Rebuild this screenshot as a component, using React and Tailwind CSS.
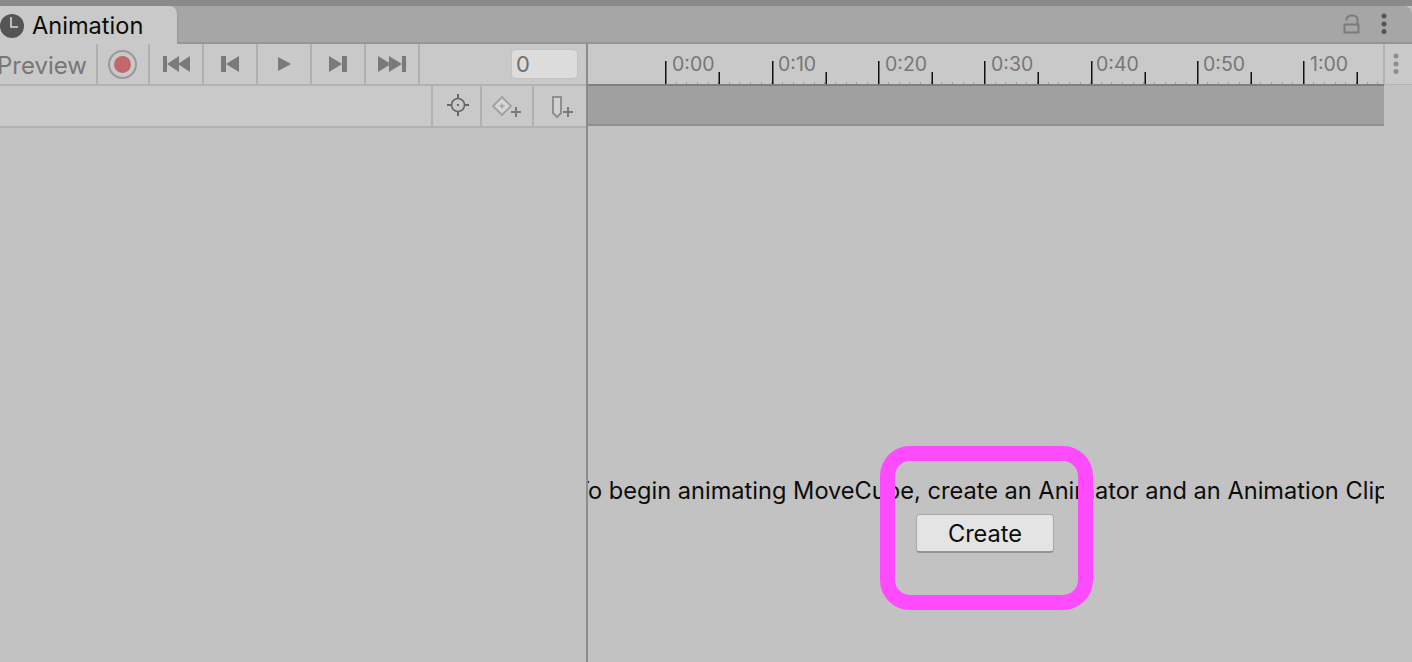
const font = { fontFamily: "Inter, 'Liberation Sans', sans-serif" };

const MAJOR = [
  [665, "0:00", 672],
  [772, "0:10", 778],
  [878, "0:20", 885],
  [984, "0:30", 991],
  [1091, "0:40", 1096],
  [1197, "0:50", 1203],
  [1303, "1:00", 1310],
];

function Clock() {
  return (
    <svg width="24" height="24" viewBox="0 0 24 24" className="shrink-0">
      <circle cx="12" cy="12" r="12" fill="#555555" />
      <path d="M11 3v10h7" fill="none" stroke="#d8d8d8" strokeWidth="1.6" />
    </svg>
  );
}

function Lock() {
  return (
    <svg width="18" height="21" viewBox="0 0 18 21">
      <path d="M1.5 10.5h14v8h-14z" fill="none" stroke="#7b7b7b" strokeWidth="2" />
      <path d="M3.500 6.500a4.500 4.500 0 0 1 4.500-5h2a4.500 4.500 0 0 1 4.500 4.500v4.500" fill="none" stroke="#7b7b7b" strokeWidth="2" />
    </svg>
  );
}

function Dots({ color }) {
  return (
    <svg width="6" height="22" viewBox="0 0 6 22">
      <circle cx="3" cy="3" r="2.500" fill={color} />
      <circle cx="3" cy="11" r="2.500" fill={color} />
      <circle cx="3" cy="18.500" r="2.500" fill={color} />
    </svg>
  );
}

function Transport({ d, w }) {
  return (
    <svg width={w} height="16" viewBox={`0 0 ${w} 16`}>
      <path d={d} fill="#7a7a7a" />
    </svg>
  );
}

function ToolCell({ width, children }) {
  return (
    <div
      className={`${width} h-full shrink-0 flex items-center justify-center border-r-[2px] border-[#b0b0b0]`}
    >
      {children}
    </div>
  );
}

function Target() {
  return (
    <svg width="24" height="24" viewBox="0 0 24 24">
      <circle cx="12" cy="12" r="6.500" fill="none" stroke="#666666" strokeWidth="1.600" />
      <path d="M12 1v5M12 18v5M1 12h5M18 12h5" stroke="#666666" strokeWidth="2" />
      <rect x="11" y="11" width="2" height="2" fill="#666666" />
    </svg>
  );
}

function KeyAdd() {
  return (
    <svg width="30" height="24" viewBox="0 0 30 24">
      <path d="M10 3l9 9-9 9-9-9z" fill="#d6d6d6" stroke="#a0a0a0" strokeWidth="1.800" />
      <path d="M10 9.500v5M7.500 12h5" stroke="#a0a0a0" strokeWidth="1.400" />
      <path d="M24 13v10M19 18h10" stroke="#7a7a7a" strokeWidth="2" />
    </svg>
  );
}

function EventAdd() {
  return (
    <svg width="26" height="26" viewBox="0 0 26 26">
      <path d="M6 4h8v16l-4 4-4-4z" fill="#d2d2d2" stroke="#8f8f8f" strokeWidth="2" />
      <path d="M21 14v10M16 19h10" stroke="#7a7a7a" strokeWidth="2" />
    </svg>
  );
}

// time ruler, drawn from x=588
function Ruler() {
  const minor = [];
  for (let i = 0; i < 69; i++) {
    const x = 665 + i * 10.63;
    if (x < 1383) minor.push(Math.round(x) - 588);
  }
  return (
    <svg width="795" height="40" viewBox="0 0 795 40" className="block" style={font}>
      {minor.map((x) => (
        <rect key={x} x={x} y="38" width="1" height="2" fill="#9a9a9a" />
      ))}
      {MAJOR.map(([x, label, labelX]) => (
        <g key={label}>
          <rect x={x - 588} y="17" width="1.500" height="23" fill="#111111" />
          <rect x={x - 588 + 53.500} y="28" width="1.500" height="12" fill="#111111" />
          <text x={labelX - 588} y="27" fontSize="19.5" fill="#777777">
            {label}
          </text>
        </g>
      ))}
    </svg>
  );
}

export default function App() {
  return (
    <div
      className="relative w-[1412px] h-[662px] overflow-hidden bg-[#c2c2c2] flex flex-col"
      style={font}
    >
      <div className="h-[6px] shrink-0 bg-[#8a8a8a]" />

      {/* tab strip */}
      <div className="h-[38px] shrink-0 flex items-stretch bg-[#a6a6a6] rounded-tr-lg border-b-[2px] border-[#969696]">
        <div className="w-[178px] -mb-[2px] pt-[2px] shrink-0 flex items-center gap-[8px] bg-[#c9c9c9] rounded-tr-lg border-r border-[#9a9a9a]">
          <Clock />
          <span className="text-[23.6px] leading-none text-[#0c0c0c]">Animation</span>
        </div>
        <div className="flex-1 flex items-center justify-end pr-[25px] gap-[20px]">
          <Lock />
          <Dots color="#555555" />
        </div>
      </div>

      <div className="flex-1 flex min-h-0">
        {/* left column */}
        <div className="w-[586px] shrink-0 flex flex-col">
          <div className="h-[42px] shrink-0 flex items-stretch bg-[#c9c9c9] border-b-[2px] border-[#b2b2b2]">
            <div className="w-[98px] shrink-0 h-full overflow-hidden flex items-center justify-end pt-[3px] pr-[9px] border-r-[2px] border-[#b0b0b0]">
              <span className="text-[24px] leading-none text-[#777777]">Preview</span>
            </div>
            <ToolCell width="w-[52px]">
              <div className="w-[29px] h-[29px] mr-[2px] rounded-full border-[2px] border-[#999999] flex items-center justify-center">
                <div className="w-[17px] h-[17px] rounded-full bg-[#c0686b]" />
              </div>
            </ToolCell>
            <ToolCell width="w-[54px]">
              <Transport w={27} d="M0 0h4v16h-4zM4 8l12-8v16zM15 8l12-8v16z" />
            </ToolCell>
            <ToolCell width="w-[54px]">
              <Transport w={18} d="M0 0h5v16h-5zM5 8l13-8v16z" />
            </ToolCell>
            <ToolCell width="w-[54px]">
              <Transport w={13} d="M0 1l13 7-13 7z" />
            </ToolCell>
            <ToolCell width="w-[54px]">
              <Transport w={18} d="M0 0l13 8-13 8zM13 0h5v16h-5z" />
            </ToolCell>
            <ToolCell width="w-[54px]">
              <Transport w={28} d="M0 0l13 8-13 8zM11 0l13 8-13 8zM24 0h4v16h-4z" />
            </ToolCell>
            <div className="flex-1 flex items-center justify-end pr-[8px]">
              <div className="w-[67px] h-[30px] rounded-[5px] bg-[#dcdcdc] border border-[#c2c2c2] flex items-center pl-[4px] text-[22px] leading-none text-[#6f6f6f]">
                0
              </div>
            </div>
          </div>

          <div className="h-[42px] shrink-0 flex items-stretch justify-end bg-[#c9c9c9] border-b-[2px] border-[#b2b2b2]">
            <div className="w-[51px] h-full shrink-0 flex items-center justify-center pb-[3px] pl-[2px] border-x-[2px] border-[#b0b0b0]">
              <Target />
            </div>
            <div className="w-[52px] h-full shrink-0 flex items-center justify-center border-r-[2px] border-[#b0b0b0]">
              <KeyAdd />
            </div>
            <div className="w-[52px] h-full shrink-0 flex items-center justify-center">
              <EventAdd />
            </div>
          </div>
        </div>

        <div className="w-[2px] shrink-0 bg-[#8c8c8c]" />

        {/* timeline column */}
        <div className="flex-1 min-w-0 flex flex-col">
          <div className="h-[40px] shrink-0 flex bg-[#c9c9c9]">
            <div className="w-[795px] shrink-0">
              <Ruler />
            </div>
            <div className="flex-1 flex items-center pl-[8px] border-l-[2px] border-[#b0b0b0]">
              <Dots color="#8e8e8e" />
            </div>
          </div>
          <div className="h-[42px] shrink-0 flex">
            <div className="w-[796px] shrink-0 bg-[#a0a0a0] border-t-[2px] border-b-[2px] border-t-[#7f7f7f] border-b-[#909090]" />
            <div className="flex-1 bg-[#c2c2c2] border-t border-[#b2b2b2]" />
          </div>

          <div className="w-[796px] mt-[351px] pr-[2px] overflow-hidden flex flex-col items-center">
            <div className="whitespace-nowrap text-[23.6px] leading-[28px] text-[#0c0c0c]">
              To begin animating MoveCube, create an Animator and an Animation Clip.
            </div>
            <button className="mt-[9px] w-[138px] h-[39px] pt-[1px] rounded-[4px] bg-[#e4e4e4] border border-[#a8a8a8] border-b-[2px] border-b-[#949494] text-[23.6px] leading-none text-[#0c0c0c]">
              Create
            </button>
          </div>
        </div>
      </div>

      {/* highlight drawn over the screenshot */}
      <div className="absolute left-[880px] top-[446px] w-[213px] h-[164px] rounded-[30px] border-[15px] border-[#ff4bff]" />
    </div>
  );
}
